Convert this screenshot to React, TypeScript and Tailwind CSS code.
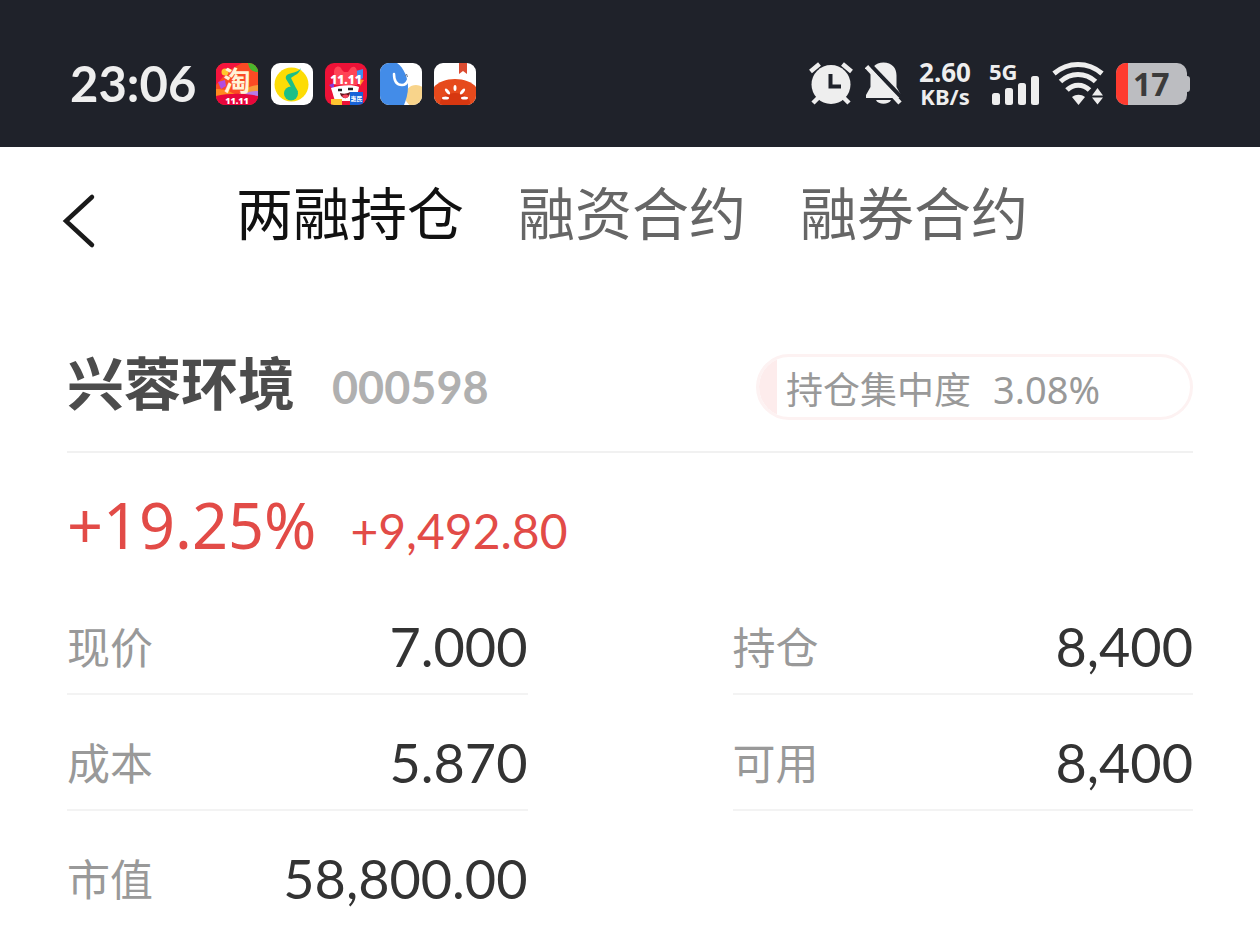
import type { ReactNode } from "react";

type FieldType = { label: string; value: string };

const tabs = ["两融持仓", "融资合约", "融券合约"];

const leftFields: FieldType[] = [
  { label: "现价", value: "7.000" },
  { label: "成本", value: "5.870" },
  { label: "市值", value: "58,800.00" },
];

const rightFields: FieldType[] = [
  { label: "持仓", value: "8,400" },
  { label: "可用", value: "8,400" },
];

const App = () => {
  return (
    <div className="min-h-screen bg-white font-['Noto_Sans','Noto_Sans_CJK_SC',sans-serif]">
      <StatusBar />
      <TopNav />
      <main className="px-[67px]">
        <StockHeader name="兴蓉环境" code="000598" concentration={3.08} />
        <Profit percent="+19.25%" amount="+9,492.80" />
        <div className="mt-[12px] grid grid-cols-2 gap-x-[205px]">
          <FieldList fields={leftFields} />
          <FieldList fields={rightFields} />
        </div>
      </main>
    </div>
  );
};

const StatusBar = () => {
  return (
    <header className="flex h-[147px] items-center justify-between bg-[#1f222a] px-[70px] pt-[20px] text-[#eeeeee]">
      <div className="flex items-center gap-[20px]">
        <span className="font-['Lato',sans-serif] text-[49px] leading-none font-bold">
          23:06
        </span>
        <div className="flex w-[260px] items-center justify-between">
          <TaobaoIcon />
          <MusicIcon />
          <TmallIcon />
          <BrowserIcon />
          <TomatoIcon />
        </div>
      </div>
      <div className="flex items-center gap-[12px]">
        <AlarmIcon />
        <MutedBellIcon />
        <div className="flex w-[60px] flex-col items-center text-center font-bold">
          <span className="text-[26px] leading-[24px]">2.60</span>
          <span className="text-[22px] leading-[24px]">KB/s</span>
        </div>
        <Signal />
        <WifiIcon />
        <Battery level={17} />
      </div>
    </header>
  );
};

const TopNav = () => {
  return (
    <nav className="flex h-[136px] items-center px-[60px]">
      <button type="button" aria-label="返回" className="mt-[12px] mr-[138px]">
        <svg className="h-[56px] w-[38px]" viewBox="0 0 38 56" fill="none">
          <path
            d="M32 4 6 28l26 24"
            stroke="#1a1a1a"
            strokeWidth="4.5"
            strokeLinecap="round"
            strokeLinejoin="miter"
          />
        </svg>
      </button>
      <div className="flex gap-[54px] pb-[4px] text-[57px] leading-[72px] whitespace-nowrap">
        {tabs.map((tab, index) => (
          <button
            key={tab}
            type="button"
            className={index === 0 ? "text-[#111111]" : "text-[#666666]"}
          >
            {tab}
          </button>
        ))}
      </div>
    </nav>
  );
};

type StockHeaderProps = { name: string; code: string; concentration: number };

const StockHeader = ({ name, code, concentration }: StockHeaderProps) => {
  return (
    <section className="flex h-[170px] items-center justify-between border-b-2 border-[#f1f1f1] pt-[40px]">
      <div className="flex items-center gap-[37px]">
        <h1 className="pb-[8px] text-[57px] leading-[72px] font-bold text-[#4c4c4c]">
          {name}
        </h1>
        <span className="font-['Lato',sans-serif] text-[45px] leading-[60px] font-bold text-[#b0b0b0]">
          {code}
        </span>
      </div>
      <div className="flex h-[66px] w-[437px] items-center overflow-hidden rounded-full border-[3px] border-[#fdf2f2] text-[37px] leading-[56px] text-[#999999]">
        <div className="h-full w-[18px] bg-[#fdecec]" />
        <span className="ml-[9px] pt-[6px]">持仓集中度</span>
        <span className="ml-[22px] pt-[4px] text-[38px]">{concentration}%</span>
      </div>
    </section>
  );
};

const Profit = ({ percent, amount }: { percent: string; amount: string }) => {
  return (
    <section className="flex items-baseline gap-[34px] pt-[36px] text-[#e24b47]">
      <span className="text-[63px] leading-[72px]">{percent}</span>
      <span className="font-['Lato',sans-serif] text-[48px] leading-[72px]">
        {amount}
      </span>
    </section>
  );
};

const FieldList = ({ fields }: { fields: FieldType[] }) => {
  return (
    <dl className="flex flex-col">
      {fields.map(({ label, value }) => (
        <div
          key={label}
          className="flex h-[116px] items-center justify-between border-b-2 border-[#f3f3f3] pt-[22px] nth-3:border-transparent"
        >
          <dt className="pt-[2px] text-[43px] leading-[60px] text-[#999999]">
            {label}
          </dt>
          <dd className="font-['Lato',sans-serif] text-[54px] leading-[60px] text-[#333333]">
            {value}
          </dd>
        </div>
      ))}
    </dl>
  );
};

const Signal = () => {
  return (
    <div className="relative h-[44px] w-[52px]">
      <span className="absolute top-0 left-[2px] text-[22px] leading-[18px] font-bold">
        5G
      </span>
      <svg className="h-full w-full" viewBox="0 0 52 44" fill="currentColor">
        <rect x="5" y="31" width="8" height="12" rx="2.5" />
        <rect x="18" y="26" width="8" height="17" rx="2.5" />
        <rect x="31" y="21" width="8" height="22" rx="2.5" />
        <rect x="44" y="14" width="8" height="29" rx="2.5" />
      </svg>
    </div>
  );
};

const Battery = ({ level }: { level: number }) => {
  return (
    <div className="flex items-center">
      <div className="flex h-[42px] w-[71px] items-center overflow-hidden rounded-[10px] bg-[#bcbdc1] text-[#3b3b3b]">
        <div className="h-full w-[12px] bg-[#ff3b2f]" />
        <span className="ml-[5px] text-[32px] leading-none font-bold">
          {level}
        </span>
      </div>
      <div className="h-[16px] w-[3px] rounded-r-[3px] bg-[#bcbdc1]" />
    </div>
  );
};

const AlarmIcon = () => {
  return (
    <svg className="h-[44px] w-[44px]" viewBox="0 0 44 44" fill="none">
      <circle cx="22" cy="22.500" r="19.5" fill="currentColor" />
      <g stroke="currentColor" strokeWidth="4.5">
        <path d="M1.500 9.500 10.500 2M33.500 2l9 7.500M4 41l6-6M40 41l-6-6" />
      </g>
      <path d="M21.500 12v12.500H32" stroke="#1f222a" strokeWidth="4" />
    </svg>
  );
};

const MutedBellIcon = () => {
  return (
    <svg className="h-[44px] w-[38px]" viewBox="0 0 38 44" fill="none">
      <path
        d="M18.500 0.500c-8.500 0-13 5.500-13 13V25L1 33v3h35v-3L31.500 25V13.500c0-7.500-4.500-13-13-13Z"
        fill="currentColor"
      />
      <path d="M11 38h15c-2 5-13 5-15 0Z" fill="currentColor" />
      <path d="M3.500 1 40 39" stroke="#1f222a" strokeWidth="4" />
      <path d="M1.500 4.500 35 41" stroke="currentColor" strokeWidth="4.5" />
    </svg>
  );
};

const WifiIcon = () => {
  return (
    <svg className="h-[44px] w-[53px]" viewBox="0 0 53 44" fill="none">
      <g stroke="currentColor" strokeWidth="5">
        <path d="M3 11.500c14-12 34-12 48 0" />
        <path d="M9.500 19.500c10-9.500 25-9.500 35 0" />
        <path d="M16 28c6.500-6.500 16-6.500 22.500 0" />
      </g>
      <path d="M21 35c4-3 9-3 13 0l-6.500 8Z" fill="currentColor" />
      <path
        d="M41 33.500 46.500 26l5.500 7.500ZM41 35.500h11L46.500 42.500Z"
        fill="currentColor"
      />
    </svg>
  );
};

type AppIconProps = { id: string; caption?: ReactNode; children: ReactNode };

const AppIcon = ({ id, caption, children }: AppIconProps) => {
  return (
    <svg
      className="h-[42px] w-[42px] overflow-visible"
      viewBox="0 0 42 42"
      fill="none"
    >
      <clipPath id={id}>
        <rect width="42" height="42" rx="9" />
      </clipPath>
      <g clipPath={`url(#${id})`}>{children}</g>
      {caption}
    </svg>
  );
};

const TaobaoIcon = () => {
  return (
    <AppIcon
      id="taobao"
      caption={
        <>
          <text
            x="21"
            y="28"
            textAnchor="middle"
            fontSize="27"
            className="fill-[#fff3d8] font-['Noto_Sans_CJK_SC',sans-serif] font-bold"
          >
            淘
          </text>
          <text
            x="21"
            y="41"
            textAnchor="middle"
            fontSize="9"
            className="fill-white font-black"
          >
            11.11
          </text>
        </>
      }
    >
      <rect width="42" height="42" fill="#fb4a24" />
      <path d="M0 0h26L12 8 0 22Z" fill="#f5143d" />
      <path d="M32 0h10v9c-6 0-9-3-10-9Z" fill="#4bb52c" />
      <path d="M2 19l7-2 1 6-5 3Z" fill="#b14be0" />
      <path d="M0 26c8 0 14 2 20 6L0 34Z" fill="#ff8a1f" />
      <path d="M42 22c-8 1-15 4-20 10l20 1Z" fill="#f79a3a" />
      <path d="M42 28c-8 0-13 2-17 5h17Z" fill="#b77be8" />
      <path d="M0 33c12-3 30-3 42 0v9H0Z" fill="#e8063c" />
      <circle cx="9" cy="9" r="3.500" fill="#ffc72e" />
    </AppIcon>
  );
};

const MusicIcon = () => {
  return (
    <AppIcon id="music">
      <rect width="42" height="42" fill="#ffffff" />
      <circle cx="20.500" cy="21.500" r="17" fill="#fddc05" />
      <path
        d="M30 5c-2 3-5 4-9 5-5 1-7 3-6 6l8 13h4L20 15c3-3 8-3 10-10Z"
        fill="#1cbf87"
      />
      <circle cx="20" cy="30.500" r="7" fill="#1cbf87" />
    </AppIcon>
  );
};

const TmallIcon = () => {
  return (
    <AppIcon
      id="tmall"
      caption={
        <>
          <text
            x="21"
            y="21"
            textAnchor="middle"
            fontSize="12"
            className="fill-white font-black"
          >
            11.11
          </text>
          <text
            x="31.500"
            y="38"
            textAnchor="middle"
            fontSize="6"
            className="fill-white font-bold"
          >
            惠民
          </text>
        </>
      }
    >
      <rect width="42" height="42" fill="#ee1237" />
      <path d="M31 8l7-2v9l-5 4Z" fill="#3d8ff0" />
      <path d="M33 16l6 1-4 6Z" fill="#ff8f2c" />
      <path d="M4 22l5-2v7Z" fill="#8b36d6" />
      <path
        d="M9 22V9c0-6 6-8 8-2l2 2h4l2-3c3-4 7-2 7 3v13Z"
        fill="#ff4355"
      />
      <path d="M6 25c8-3 22-4 28-1l-3 14H10Z" fill="#ffffff" />
      <path d="M13 27h4M23 26h5" stroke="#222222" strokeWidth="2.500" />
      <path d="M15 30c3 1 7 1 10-1 0 8-9 8-10 1Z" fill="#65131d" />
      <path d="M17 33c2-2 5-2 7 0-2 3-5 3-7 0Z" fill="#f5455c" />
      <path d="M6 36h11v6H6Z" fill="#ffc530" />
      <rect x="25" y="29" width="13" height="13" fill="#1763d8" />
    </AppIcon>
  );
};

const BrowserIcon = () => {
  return (
    <AppIcon id="browser">
      <rect width="42" height="42" fill="#ffffff" />
      <circle cx="36" cy="33" r="11" fill="#f8d48b" />
      <path
        d="M0 0h17c7 5 11 15 11 24 0 7-2 13-4 18H0Z"
        fill="#438ce8"
      />
      <path
        d="M14 11c0 7 3 11 8 11 3 0 5-2 6-5"
        stroke="#ffffff"
        strokeWidth="2.500"
        strokeLinecap="round"
      />
      <path d="M25 13l1.500-2 1 3" stroke="#6f7c93" />
    </AppIcon>
  );
};

const TomatoIcon = () => {
  return (
    <AppIcon id="tomato">
      <rect width="42" height="42" fill="#ffffff" />
      <path d="M25 0h8v11l-4-3-4 3Z" fill="#db4b30" />
      <path
        d="M0 24c4-5 12-8 21-8s17 3 21 8v18H0Z"
        fill="#e64a1c"
      />
      <ellipse cx="21" cy="40" rx="15" ry="10" fill="#d73710" />
      <g fill="#ffffff">
        <ellipse cx="21" cy="25" rx="1.500" ry="3" />
        <ellipse
          cx="13.500"
          cy="28.500"
          rx="1.500"
          ry="3.500"
          transform="rotate(-40 13.500 28.500)"
        />
        <ellipse
          cx="28.500"
          cy="28.500"
          rx="1.500"
          ry="3.500"
          transform="rotate(40 28.500 28.500)"
        />
        <ellipse cx="11.500" cy="35" rx="3.500" ry="1.500" />
        <ellipse cx="30.500" cy="35" rx="3.500" ry="1.500" />
      </g>
    </AppIcon>
  );
};

export default App;
